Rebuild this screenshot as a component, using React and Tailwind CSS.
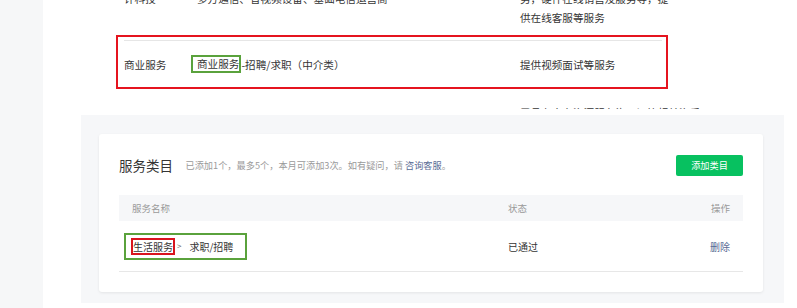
export default function App() {
  return (
    <div className="w-[797px] h-[308px] overflow-hidden flex bg-white font-['Noto_Sans_CJK_SC',sans-serif] text-[#353535]">
      {/* left rail */}
      <div className="w-[43px] shrink-0 bg-[#f6f7f8]"></div>

      <div className="flex-1 flex flex-col">
        {/* previous row, cut at the top */}
        <div className="-mt-[11.5px] ml-[81px] w-[544px] grid grid-cols-[73px_323px_1fr] text-[10.6px] leading-[19px] pb-[8.5px]">
          <div className="whitespace-nowrap">计科技</div>
          <div className="whitespace-nowrap">多方通信、音视频设备、基础电信运营商</div>
          <div className="whitespace-nowrap">
            <div>务，硬件在线销售及服务等，提</div>
            <div>供在线客服等服务</div>
          </div>
        </div>

        {/* highlighted row */}
        <div className="ml-[73px] w-[552px] h-[54px] border-2 border-[#e5141f] pt-[3px] pl-[6px] pr-[4px]">
          <div className="h-[47px] border-t border-[#e6e6e6] grid grid-cols-[67px_329px_1fr] items-center text-[10.6px] leading-[19px]">
            <div className="whitespace-nowrap">商业服务</div>
            <div className="whitespace-nowrap flex items-center">
              <span className="inline-block h-[18px] border-2 border-[#5aa23c] pl-[4px] leading-[14px]">商业服务</span>
              <span>-招聘/求职（中介类）</span>
            </div>
            <div className="whitespace-nowrap">提供视频面试等服务</div>
          </div>
        </div>

        {/* next row, hidden under the panel */}
        <div className="h-[19.5px] overflow-hidden pl-[477px]">
          <div className="mt-[19px] text-[10.6px] leading-none whitespace-nowrap">需具有人力资源服务许可证等相关资质</div>
        </div>

        {/* service category panel */}
        <div className="mt-[6.5px] ml-[38px] mr-[13px] h-[188px] bg-[#f6f7f9] pt-[19px] pl-[18px] pr-[21px]">
          <div className="h-[158px] bg-white rounded-[3px] shadow-[0_1px_3px_rgba(0,0,0,0.08)] px-[20px] pt-[21px]">
            <div className="flex items-center h-[21px]">
              <span className="text-[13.5px] leading-[21px] text-[#353535]">服务类目</span>
              <span className="ml-[12.5px] text-[9.2px] text-[#9a9a9a] whitespace-nowrap">
                已添加1个，最多5个，本月可添加3次。如有疑问，请 <span className="text-[#576b95]">咨询客服</span>。
              </span>
              <button className="ml-auto w-[67px] h-[21px] rounded-[2px] bg-[#07c160] text-white text-[9.2px] leading-[21px]">
                添加类目
              </button>
            </div>

            <div className="mt-[19px] h-[26px] bg-[#f6f7f9] grid grid-cols-[389px_1fr_auto] items-center pr-[13px] text-[9.5px] text-[#9a9a9a]">
              <div className="pl-[13px]">服务名称</div>
              <div>状态</div>
              <div>操作</div>
            </div>

            <div className="h-[51px] border-b border-[#e7e7e7] grid grid-cols-[389px_1fr_auto] items-center pr-[13px] text-[10px]">
              <div className="pl-[5px]">
                <div className="inline-flex items-center h-[27px] border-2 border-[#5aa23c] pl-[5px] pr-[12px]">
                  <span className="inline-block h-[17px] border-2 border-[#d9141e] leading-[13px] whitespace-nowrap">生活服务</span>
                  <span className="ml-[2px] text-[8px] text-[#666]">&gt;</span>
                  <span className="ml-[8px] whitespace-nowrap">求职/招聘</span>
                </div>
              </div>
              <div>已通过</div>
              <div className="text-[#576b95]">删除</div>
            </div>
          </div>
        </div>
      </div>
    </div>
  );
}
